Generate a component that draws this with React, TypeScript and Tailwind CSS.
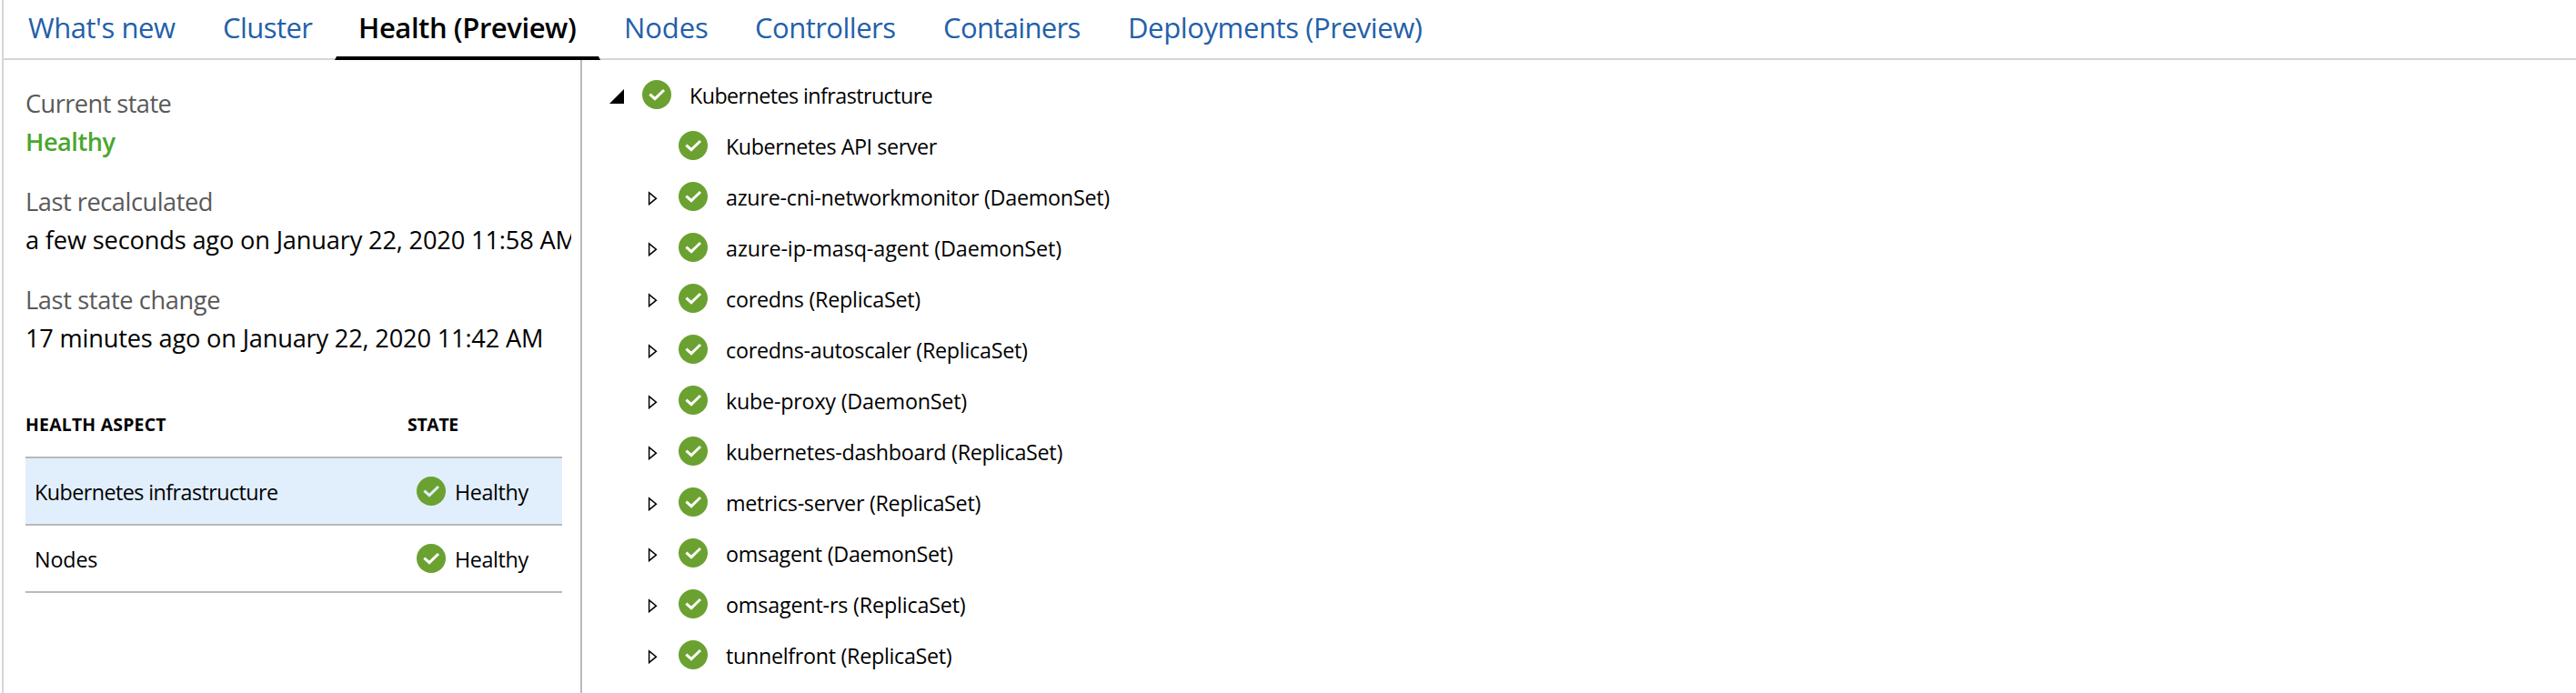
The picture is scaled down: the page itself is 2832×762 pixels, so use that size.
const tabs = [
  { label: "What's new", cls: "w-[214px] tracking-[-0.45px]" },
  { label: "Cluster", cls: "w-[149px] tracking-[-0.56px]" },
  { label: "Health (Preview)", cls: "w-[292px] tracking-[-0.42px]", active: true },
  { label: "Nodes", cls: "w-[144px] tracking-[-0.1px]" },
  { label: "Controllers", cls: "w-[207px] tracking-[-0.51px]" },
  { label: "Containers", cls: "w-[203px] tracking-[-0.64px]" },
  { label: "Deployments (Preview)", cls: "tracking-[-0.38px]" },
];

const facts = [
  { label: "Current state", labelCls: "tracking-[-0.55px]", value: "Healthy", valueCls: "font-semibold text-[#4ba62f] tracking-[-0.5px]" },
  { label: "Last recalculated", labelCls: "tracking-[-0.45px]", value: "a few seconds ago on January 22, 2020 11:58 AM", valueCls: "tracking-[-0.16px]" },
  { label: "Last state change", labelCls: "tracking-[-0.36px]", value: "17 minutes ago on January 22, 2020 11:42 AM", valueCls: "tracking-[-0.18px]" },
];

const aspects = [
  { name: "Kubernetes infrastructure", cls: "tracking-[-0.55px]", selected: true },
  { name: "Nodes", cls: "tracking-[-0.14px]", selected: false },
];

const nodes = [
  { name: "Kubernetes API server", cls: "tracking-[-0.42px]", leaf: true },
  { name: "azure-cni-networkmonitor (DaemonSet)", cls: "tracking-[-0.25px]" },
  { name: "azure-ip-masq-agent (DaemonSet)", cls: "tracking-[-0.07px]" },
  { name: "coredns (ReplicaSet)", cls: "tracking-[-0.25px]" },
  { name: "coredns-autoscaler (ReplicaSet)", cls: "tracking-[-0.26px]" },
  { name: "kube-proxy (DaemonSet)", cls: "tracking-[-0.22px]" },
  { name: "kubernetes-dashboard (ReplicaSet)", cls: "tracking-[-0.3px]" },
  { name: "metrics-server (ReplicaSet)", cls: "tracking-[-0.28px]" },
  { name: "omsagent (DaemonSet)", cls: "tracking-[-0.26px]" },
  { name: "omsagent-rs (ReplicaSet)", cls: "tracking-[-0.17px]" },
  { name: "tunnelfront (ReplicaSet)", cls: "tracking-[-0.3px]" },
];

function HealthyIcon({ markClass = "stroke-white" }: { markClass?: string }) {
  return (
    <svg viewBox="0 0 32 32" className="size-8 shrink-0" fill="none">
      <circle cx="16" cy="16" r="16" fill="#6ba131" />
      <path d="M8.4 15.6 14 20.7 24 11" strokeWidth="3" className={markClass} />
    </svg>
  );
}

export default function App() {
  return (
    <div className="flex h-[762px] w-full overflow-hidden bg-white pl-0.5 font-['Open_Sans',sans-serif] text-black">
      <div className="flex min-w-0 flex-1 flex-col border-l-2 border-[#d6d6d6]">
        <nav className="flex h-[66px] shrink-0 border-b-2 border-[#d6d6d6] pl-px text-[31px] leading-[60px]">
          {tabs.map((t) => (
            <div
              key={t.label}
              className={`h-[66px] shrink-0 whitespace-nowrap pl-[26px] ${t.cls} ${
                t.active
                  ? "flex flex-col justify-between font-semibold"
                  : "text-[#235fa9]"
              }`}
            >
              <span>{t.label}</span>
              {t.active && (
                <span className="-ml-[26px] block h-1 border-x-2 border-b-4 border-x-transparent border-b-black" />
              )}
            </div>
          ))}
        </nav>
        <div className="flex min-h-0 flex-1">
          <aside className="w-[636px] shrink-0 border-r-2 border-[#b9b9b9] pl-6 pt-[27px]">
            <dl className="flex w-[600px] flex-col gap-6 overflow-hidden whitespace-nowrap text-[27.2px] leading-[42px]">
              {facts.map((f) => (
                <div key={f.label}>
                  <dt className={`text-[#595959] ${f.labelCls}`}>{f.label}</dt>
                  <dd className={f.valueCls}>{f.value}</dd>
                </div>
              ))}
            </dl>
            <div className="w-[590px]">
              <div className="flex h-[109px] items-center pt-[38px] text-[19.4px] font-bold">
                <span className="w-[420px] tracking-[0.22px]">HEALTH ASPECT</span>
                <span className="tracking-[-0.3px]">STATE</span>
              </div>
              <div className="border-t-2 border-[#b9b9b9] text-[23.3px]">
                {aspects.map((a) => (
                  <div
                    key={a.name}
                    className={`flex h-[74px] items-center border-b-2 border-[#b9b9b9] pl-2.5 ${a.selected ? "bg-[#e1effc]" : ""}`}
                  >
                    <span className={`w-[420px] pt-0.5 ${a.cls}`}>{a.name}</span>
                    <HealthyIcon markClass={a.selected ? "stroke-[#e1effc]" : "stroke-white"} />
                    <span className="pl-2.5 pt-0.5 tracking-[-0.38px]">Healthy</span>
                  </div>
                ))}
              </div>
            </div>
          </aside>
          <main className="flex-1 whitespace-nowrap pl-[30px] pt-2.5 text-[23.3px]">
            <div className="flex h-14 items-center">
              <svg viewBox="0 0 16 16" className="mr-5 mt-1 size-4">
                <path d="M16 0V16H0z" />
              </svg>
              <HealthyIcon />
              <span className="ml-5 pt-0.5 tracking-[-0.57px]">Kubernetes infrastructure</span>
            </div>
            {nodes.map((n) => (
              <div key={n.name} className="flex h-14 items-center pl-[42px]">
                <svg viewBox="0 0 12 16" className="mr-[22px] mt-1 h-4 w-3" fill="none">
                  {!n.leaf && <path d="M1.6 1.8V14.6L9.4 8.2z" stroke="#000" strokeWidth="1.5" />}
                </svg>
                <HealthyIcon />
                <span className={`ml-5 pt-0.5 ${n.cls}`}>{n.name}</span>
              </div>
            ))}
          </main>
        </div>
      </div>
    </div>
  );
}
